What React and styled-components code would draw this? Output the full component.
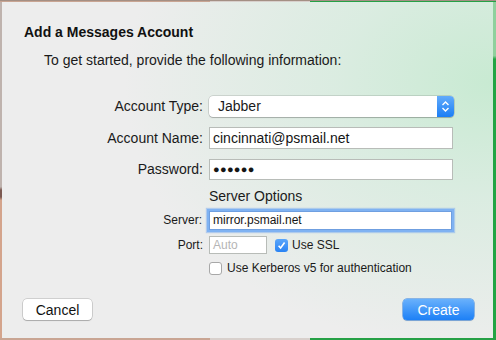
import React from 'react'
import styled, { createGlobalStyle } from 'styled-components'

const Global = createGlobalStyle`
    html, body {
        margin: 0;
        padding: 0;
        width: 496px;
        height: 340px;
        overflow: hidden;
        background: #b9aaa3;
        font-family: "Liberation Sans", Arial, sans-serif;
        color: #1a1a1a;
    }
`

const Desktop = styled.div`
    display: flex;
    width: 496px;
    height: 340px;
    padding-top: 1px;
    box-sizing: border-box;
    background: linear-gradient(to right, #c9a593 0px, #c9a593 210px, #d8d0cc 210px, #d8d0cc 310px, #26a046 310px);
    border-top: 1px solid #a48f84;
`

const LeftEdge = styled.div`
    width: 2px;
    height: 336px;
    background: linear-gradient(to bottom, #bfb3ae 0%, #bfb3ae 55%, #7c5a52 56%, #7c5a52 58%, #d4a48c 59%);
`

const RightEdge = styled.div`
    width: 3px;
    height: 336px;
    background: linear-gradient(to bottom, #8fd09d 0%, #8fd09d 16%, #22a444 17%);
`

const Sheet = styled.div`
    width: 491px;
    height: 336px;
    box-sizing: border-box;
    padding-top: 22px;
    display: flex;
    flex-direction: column;
    background:
        radial-gradient(ellipse 450px 330px at 100% 24%, rgba(200, 234, 210, 1) 0%, rgba(214, 236, 222, 0.8) 35%, rgba(236, 236, 236, 0) 82%),
        #ededed;
`

const Title = styled.div`
    margin-left: 22px;
    font-size: 14px;
    line-height: 17px;
    font-weight: bold;
    color: #111;
`

const Intro = styled.div`
    margin: 11px 0 0 42px;
    font-size: 14px;
    line-height: 17px;
    color: #1a1a1a;
`

const Form = styled.div`
    display: grid;
    grid-template-columns: 201px 245px;
    column-gap: 6px;
    align-items: center;
    margin-top: 27px;
`

const Label = styled.div`
    text-align: right;
    font-size: ${p => (p.small ? '12px' : '14px')};
    line-height: 17px;
    margin-top: ${p => p.top || 0}px;
    padding-right: ${p => p.pad || 0}px;
`

const Popup = styled.div`
    display: flex;
    height: 21px;
    border-radius: 4px;
    background: #fff;
    box-shadow: 0 0 0 0.5px rgba(0, 0, 0, 0.22), 0 1px 1px rgba(0, 0, 0, 0.18);
    overflow: hidden;
`

const PopupText = styled.div`
    flex: 1;
    padding-left: 9px;
    font-size: 14px;
    line-height: 21px;
`

const Stepper = styled.div`
    width: 17px;
    display: flex;
    align-items: center;
    justify-content: center;
    background: linear-gradient(to bottom, #62abfb, #1b7ef5);
`

const Field = styled.div`
    height: ${p => p.h || 22}px;
    width: ${p => (p.w ? p.w + 'px' : 'auto')};
    margin-top: ${p => p.top || 0}px;
    margin-right: ${p => p.right || 0}px;
    box-sizing: border-box;
    border: 1px solid ${p => (p.focus ? '#6f9fe0' : '#b8bcb8')};
    background: #fff;
    padding-left: 3px;
    font-size: ${p => (p.small ? '12px' : '14px')};
    line-height: ${p => (p.h || 22) - 2}px;
    color: ${p => (p.placeholder ? '#b5b5b5' : '#151515')};
    box-shadow: ${p => (p.focus ? '0 0 0 2px #7fb2f2, 0 0 1px 3px rgba(120, 170, 240, 0.5)' : 'none')};
`

const Dots = styled.span`
    font-size: 11px;
    letter-spacing: 0.3px;
    position: relative;
    top: -1px;
`

const Section = styled.div`
    font-size: 14px;
    line-height: 17px;
    margin-top: 8px;
    margin-bottom: 6px;
`

const Row = styled.div`
    display: flex;
    align-items: center;
    margin-top: ${p => p.top || 0}px;
`

const Check = styled.div`
    width: 13px;
    height: 13px;
    box-sizing: border-box;
    border-radius: 3px;
    display: flex;
    align-items: center;
    justify-content: center;
    margin-left: ${p => p.left || 0}px;
    background: ${p => (p.on ? 'linear-gradient(to bottom, #5aa6fa, #2a83f4)' : '#fff')};
    border: ${p => (p.on ? 'none' : '1px solid #a8a8a8')};
`

const CheckText = styled.span`
    font-size: 12px;
    margin-left: ${p => p.left || 5}px;
    line-height: 16px;
`

const Footer = styled.div`
    display: flex;
    justify-content: space-between;
    margin-top: auto;
    margin-bottom: 18px;
    padding: 0 19px 0 21px;
`

const Button = styled.div`
    width: ${p => p.w}px;
    height: 21px;
    box-sizing: border-box;
    border-radius: 4px;
    display: flex;
    align-items: center;
    justify-content: center;
    font-size: 14px;
    color: ${p => (p.primary ? '#fff' : '#111')};
    background: ${p => (p.primary ? 'linear-gradient(to bottom, #69b1fc, #1d80f6)' : '#fff')};
    box-shadow: ${p => (p.primary
        ? '0 0 0 0.5px #2a7de0, 0 1px 1px rgba(0,0,0,0.15)'
        : '0 0 0 0.5px rgba(0,0,0,0.25), 0 1px 1px rgba(0,0,0,0.18)')};
`

function Chevrons() {
    return (
        <svg width="9" height="13" viewBox="0 0 9 13">
            <path d="M1.5 5 L4.5 2 L7.5 5" fill="none" stroke="#fff" strokeWidth="1.4" />
            <path d="M1.5 8 L4.5 11 L7.5 8" fill="none" stroke="#fff" strokeWidth="1.4" />
        </svg>
    )
}

function Tick() {
    return (
        <svg width="9" height="9" viewBox="0 0 9 9">
            <path d="M1.6 4.8 L3.6 7 L7.6 1.6" fill="none" stroke="#fff" strokeWidth="1.6" />
        </svg>
    )
}

function App() {
    return (
        <>
            <Global />
            <Desktop>
                <LeftEdge />
                <Sheet>
                    <Title>Add a Messages Account</Title>
                    <Intro>To get started, provide the following information:</Intro>
                    <Form>
                        <Label>Account Type:</Label>
                        <Popup>
                            <PopupText>Jabber</PopupText>
                            <Stepper><Chevrons /></Stepper>
                        </Popup>

                        <Label top={10}>Account Name:</Label>
                        <Field top={10} right={1}>cincinnati@psmail.net</Field>

                        <Label top={10}>Password:</Label>
                        <Field top={10} h={21} right={1}><Dots>●●●●●●</Dots></Field>

                        <div />
                        <Section>Server Options</Section>

                        <Label small pad={1}>Server:</Label>
                        <Field focus small h={19} right={2}>mirror.psmail.net</Field>

                        <Label small top={6}>Port:</Label>
                        <Row top={6}>
                            <Field small placeholder="true" h={18} w={58}>Auto</Field>
                            <Check on left={8}><Tick /></Check>
                            <CheckText left={4}>Use SSL</CheckText>
                        </Row>

                        <div />
                        <Row top={6}>
                            <Check />
                            <CheckText>Use Kerberos v5 for authentication</CheckText>
                        </Row>
                    </Form>
                    <Footer>
                        <Button w={69}>Cancel</Button>
                        <Button primary w={71}>Create</Button>
                    </Footer>
                </Sheet>
                <RightEdge />
            </Desktop>
        </>
    )
}

export default App
